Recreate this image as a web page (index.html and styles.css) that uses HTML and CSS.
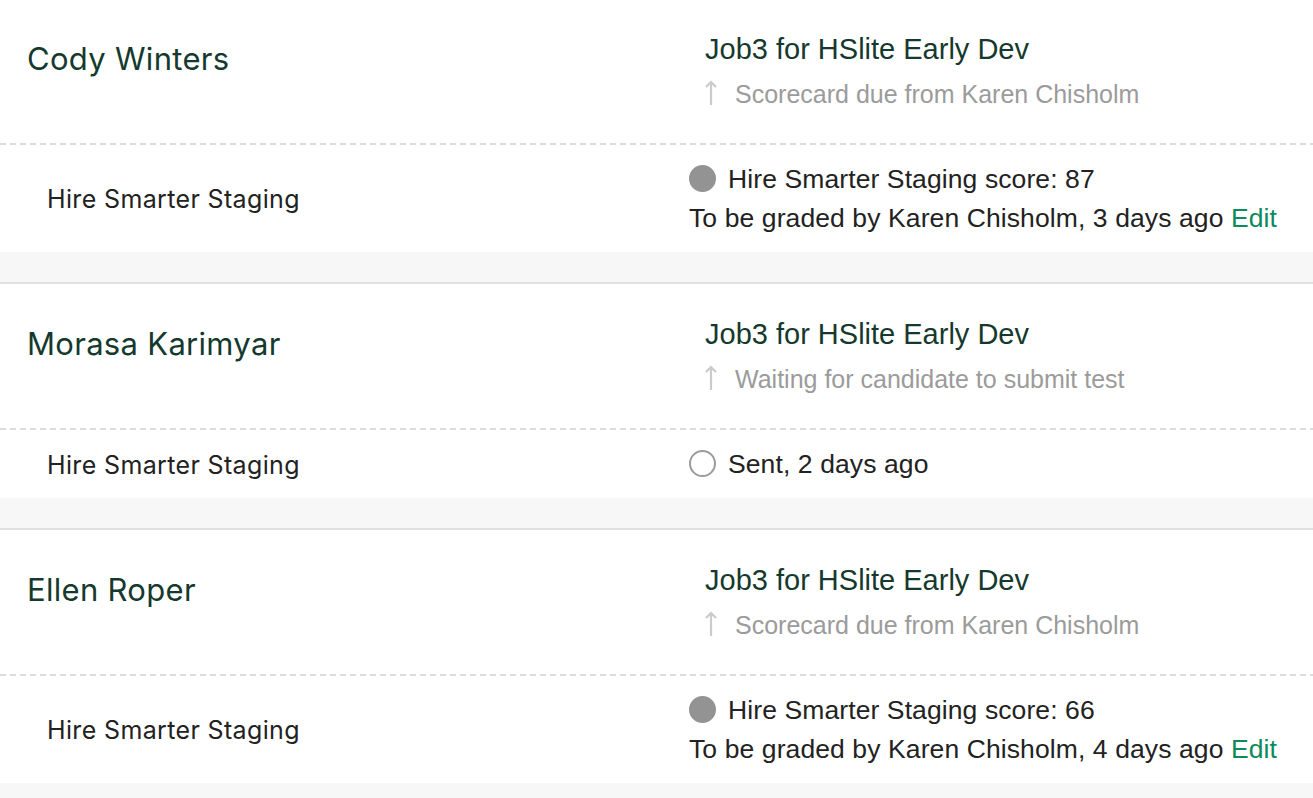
FILE: index.html
```html
<!DOCTYPE html>
<html lang="en">
<head>
    <meta charset="UTF-8">
    <meta name="viewport" content="width=device-width, initial-scale=1.0">
    <title>Take-home tests</title>
    <link rel="stylesheet" href="styles.css">
</head>
<body>
    <div class="list">
        <div class="card">
            <div class="card-top">
                <div class="candidate">Cody Winters</div>
                <div class="job">
                    <div class="job-title">Job3 for HSlite Early Dev</div>
                    <div class="job-status">
                        <svg class="arrow" viewBox="0 0 12 26"><path d="M6 25V2M1 7l5-5 5 5"/></svg>
                        Scorecard due from Karen Chisholm
                    </div>
                </div>
            </div>
            <div class="divider"></div>
            <div class="card-bottom">
                <div class="test-name">Hire Smarter Staging</div>
                <div class="test-result">
                    <div class="result-line"><span class="dot filled"></span>Hire Smarter Staging score: 87</div>
                    <div class="result-line">To be graded by Karen Chisholm, 3 days ago&nbsp;<a class="edit" href="#">Edit</a></div>
                </div>
            </div>
        </div>

        <div class="card">
            <div class="card-top">
                <div class="candidate">Morasa Karimyar</div>
                <div class="job">
                    <div class="job-title">Job3 for HSlite Early Dev</div>
                    <div class="job-status">
                        <svg class="arrow" viewBox="0 0 12 26"><path d="M6 25V2M1 7l5-5 5 5"/></svg>
                        Waiting for candidate to submit test
                    </div>
                </div>
            </div>
            <div class="divider"></div>
            <div class="card-bottom">
                <div class="test-name">Hire Smarter Staging</div>
                <div class="test-result">
                    <div class="result-line"><span class="dot"></span>Sent, 2 days ago</div>
                </div>
            </div>
        </div>

        <div class="card">
            <div class="card-top">
                <div class="candidate">Ellen Roper</div>
                <div class="job">
                    <div class="job-title">Job3 for HSlite Early Dev</div>
                    <div class="job-status">
                        <svg class="arrow" viewBox="0 0 12 26"><path d="M6 25V2M1 7l5-5 5 5"/></svg>
                        Scorecard due from Karen Chisholm
                    </div>
                </div>
            </div>
            <div class="divider"></div>
            <div class="card-bottom">
                <div class="test-name">Hire Smarter Staging</div>
                <div class="test-result">
                    <div class="result-line"><span class="dot filled"></span>Hire Smarter Staging score: 66</div>
                    <div class="result-line">To be graded by Karen Chisholm, 4 days ago&nbsp;<a class="edit" href="#">Edit</a></div>
                </div>
            </div>
        </div>
    </div>
</body>
</html>
```

FILE: styles.css
```css
body {
    margin: 0;
    padding: 0;
    background: #f7f7f7;
    color: #222;
    font-family: "Liberation Sans", Arial, sans-serif;
}

.list {
    margin-top: -1px;
}

.card {
    background: #fff;
    border-top: 2px solid #dfdfdf;
    margin-bottom: 30px;
}

.card:first-child {
    border-top: none;
}

.card-top {
    display: flex;
    height: 144px;
}

.candidate {
    flex: none;
    width: 678px;
    padding: 39px 0 0 27px;
    font-family: Inter, "Liberation Sans", sans-serif;
    font-size: 31px;
    letter-spacing: 0.3px;
    line-height: 42px;
    color: #15392d;
}

.job {
    padding-top: 28px;
}

.job-title {
    font-size: 29px;
    line-height: 45px;
    color: #15392d;
}

.job-status {
    display: flex;
    align-items: center;
    font-size: 25px;
    line-height: 45px;
    color: #9b9b9b;
}

.arrow {
    width: 12px;
    height: 26px;
    margin: -4px 18px 0 0;
    fill: none;
    stroke: #cbcbcb;
    stroke-width: 2.2;
}

.divider {
    height: 2px;
    background: repeating-linear-gradient(to right, #dcdcdc 0 6px, transparent 6px 10px);
}

.card-bottom {
    display: flex;
    align-items: center;
    padding: 15px 0 14px;
}

.test-name {
    flex: none;
    width: 642px;
    padding-left: 47px;
    font-family: Inter, "Liberation Sans", sans-serif;
    font-size: 25px;
    letter-spacing: 0.35px;
    color: #222;
}

.test-result {
    font-size: 26.5px;
    letter-spacing: 0.1px;
    line-height: 39px;
}

.result-line {
    display: flex;
    align-items: center;
    white-space: nowrap;
}

.dot {
    flex: none;
    box-sizing: border-box;
    width: 27px;
    height: 27px;
    margin: -3px 12px 0 0;
    border: 2px solid #9b9b9b;
    border-radius: 50%;
}

.dot.filled {
    background: #939393;
    border-color: #939393;
}

.edit {
    color: #0b8a5e;
    text-decoration: none;
}
```
